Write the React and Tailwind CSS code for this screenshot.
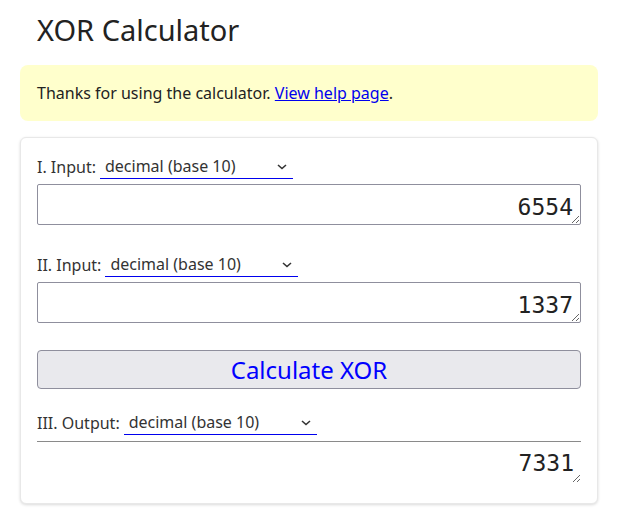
import React, { useState } from 'react';

const BASES = [
    { value: '10', label: 'decimal (base 10)' },
    { value: '2', label: 'binary (base 2)' },
    { value: '8', label: 'octal (base 8)' },
    { value: '16', label: 'hexadecimal (base 16)' },
];

const Chevron = () => (
    <svg width="10" height="6" viewBox="0 0 10 6" className="absolute right-[6px] top-[10px] pointer-events-none">
        <path d="M1 1l4 3.5L9 1" fill="none" stroke="#333" strokeWidth="1.6" />
    </svg>
);

const BaseSelect = ({ label, value, onChange }) => (
    <div className="flex items-center h-[25px]">
        <span className="text-[16px] text-[#333] mr-[4px]">{label}</span>
        <div className="relative w-[193px] border-b border-b-[#0000ee]">
            <select
                value={value}
                onChange={e => onChange(e.target.value)}
                className="appearance-none block w-full h-[24px] pl-[5px] pr-5 text-[16px] text-[#333] bg-white border-0 outline-none rounded-none"
                style={{ fontFamily: '"Noto Sans", sans-serif' }}
            >
                {BASES.map(b => <option key={b.value} value={b.value}>{b.label}</option>)}
            </select>
            <Chevron />
        </div>
    </div>
);

const App = () => {
    const [a, setA] = useState('6554');
    const [b, setB] = useState('1337');
    const [baseA, setBaseA] = useState('10');
    const [baseB, setBaseB] = useState('10');
    const [baseOut, setBaseOut] = useState('10');
    const [out, setOut] = useState('7331');

    const calculate = () => {
        const x = parseInt(a.trim(), parseInt(baseA));
        const y = parseInt(b.trim(), parseInt(baseB));
        if (isNaN(x) || isNaN(y)) {
            setOut('');
            return;
        }
        setOut((x ^ y).toString(parseInt(baseOut)));
    };

    return (
        <div className="min-h-screen bg-white pl-5 pr-[22px] pt-[10px] text-[#222]" style={{ fontFamily: '"Noto Sans", sans-serif' }}>
            <h1 className="text-[29px] leading-[40px] pl-[17px] mb-[15px]">XOR Calculator</h1>

            <div className="bg-[#ffffcc] rounded-lg px-[17px] py-4 text-[16px] leading-6 text-[#222]">
                Thanks for using the calculator. <a href="#" className="text-[#0000ee] underline">View help page</a>.
            </div>

            <div className="mt-4 bg-white border border-[#e8e8e8] rounded-md shadow-[0_1px_3px_rgba(0,0,0,0.15)] px-4 pt-4 pb-[20px]">
                <BaseSelect label="I. Input:" value={baseA} onChange={setBaseA} />
                <textarea
                    value={a}
                    onChange={e => setA(e.target.value)}
                    rows={1}
                    className="block w-full h-[41px] mt-[5px] border border-[#8f8f9d] rounded-[2px] text-right text-[23px] leading-[27px] pt-[9px] pr-[7px] text-[#222] outline-none"
                    style={{ fontFamily: '"DejaVu Sans Mono", monospace' }}
                />

                <div className="mt-[27px]">
                    <BaseSelect label="II. Input:" value={baseB} onChange={setBaseB} />
                </div>
                <textarea
                    value={b}
                    onChange={e => setB(e.target.value)}
                    rows={1}
                    className="block w-full h-[41px] mt-[5px] border border-[#8f8f9d] rounded-[2px] text-right text-[23px] leading-[27px] pt-[9px] pr-[7px] text-[#222] outline-none"
                    style={{ fontFamily: '"DejaVu Sans Mono", monospace' }}
                />

                <button
                    onClick={calculate}
                    className="block w-full h-[39px] mt-[27px] bg-[#e9e9ed] border border-[#8f8f9d] rounded-[4px] text-[24px] leading-none text-[#0000ff]"
                >
                    Calculate XOR
                </button>

                <div className="mt-[21px]">
                    <BaseSelect label="III. Output:" value={baseOut} onChange={setBaseOut} />
                </div>
                <textarea
                    value={out}
                    readOnly
                    rows={1}
                    className="block w-full h-[42px] mt-[6px] border-0 border-t border-[#8a8a8a] text-right text-[23px] leading-[27px] pt-[8px] pr-[7px] text-[#222] outline-none"
                    style={{ fontFamily: '"DejaVu Sans Mono", monospace' }}
                />
            </div>
        </div>
    );
};

export default App;
